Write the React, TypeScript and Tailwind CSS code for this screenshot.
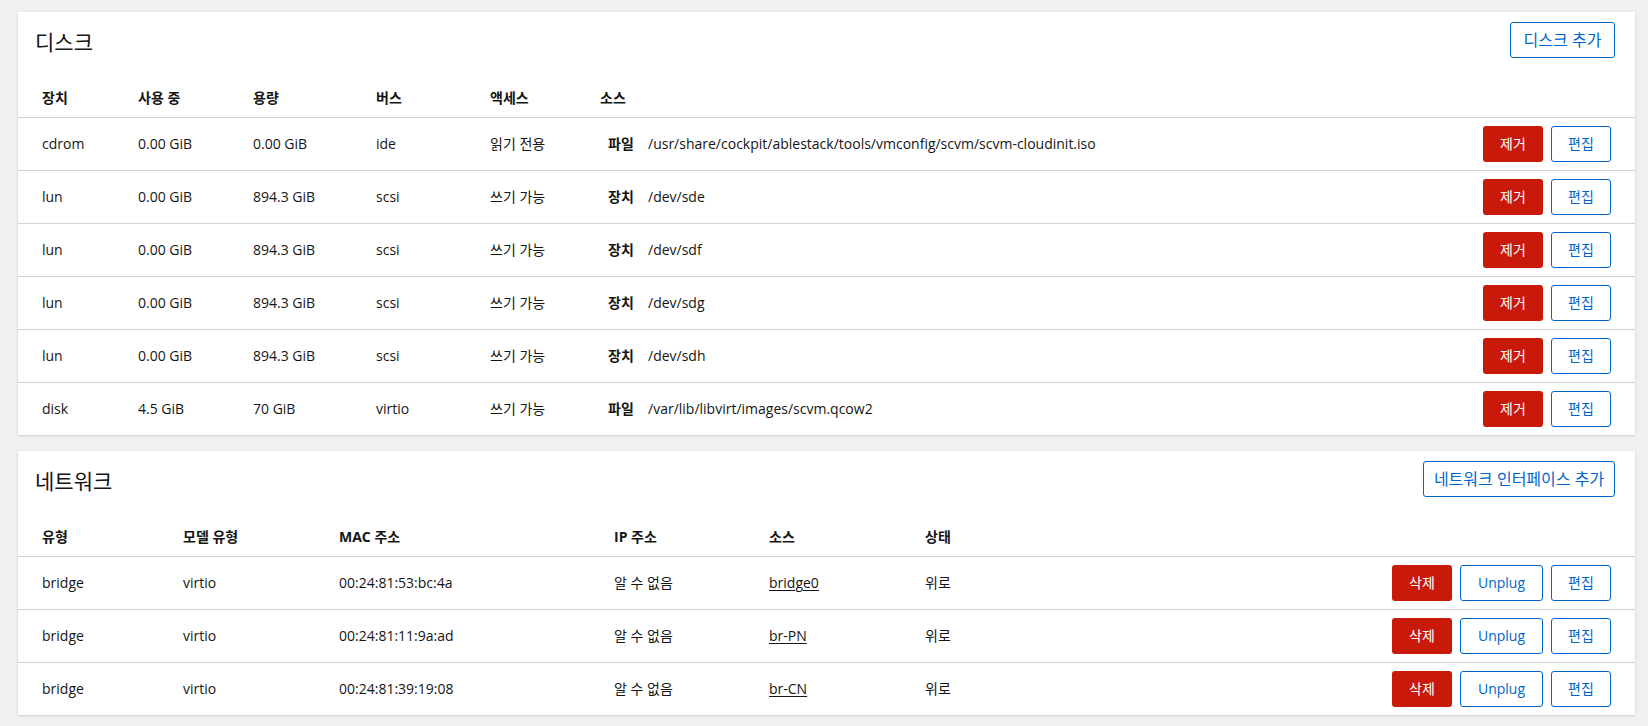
import React from "react";

type Disk = {
  dev: string;
  used: string;
  cap: string;
  bus: string;
  access: string;
  kind: string;
  src: string;
};

type Nic = {
  type: string;
  model: string;
  mac: string;
  ip: string;
  src: string;
  state: string;
};

const disks: Disk[] = [
  { dev: "cdrom", used: "0.00 GiB", cap: "0.00 GiB", bus: "ide", access: "읽기 전용", kind: "파일", src: "/usr/share/cockpit/ablestack/tools/vmconfig/scvm/scvm-cloudinit.iso" },
  { dev: "lun", used: "0.00 GiB", cap: "894.3 GiB", bus: "scsi", access: "쓰기 가능", kind: "장치", src: "/dev/sde" },
  { dev: "lun", used: "0.00 GiB", cap: "894.3 GiB", bus: "scsi", access: "쓰기 가능", kind: "장치", src: "/dev/sdf" },
  { dev: "lun", used: "0.00 GiB", cap: "894.3 GiB", bus: "scsi", access: "쓰기 가능", kind: "장치", src: "/dev/sdg" },
  { dev: "lun", used: "0.00 GiB", cap: "894.3 GiB", bus: "scsi", access: "쓰기 가능", kind: "장치", src: "/dev/sdh" },
  { dev: "disk", used: "4.5 GiB", cap: "70 GiB", bus: "virtio", access: "쓰기 가능", kind: "파일", src: "/var/lib/libvirt/images/scvm.qcow2" },
];

const nics: Nic[] = [
  { type: "bridge", model: "virtio", mac: "00:24:81:53:bc:4a", ip: "알 수 없음", src: "bridge0", state: "위로" },
  { type: "bridge", model: "virtio", mac: "00:24:81:11:9a:ad", ip: "알 수 없음", src: "br-PN", state: "위로" },
  { type: "bridge", model: "virtio", mac: "00:24:81:39:19:08", ip: "알 수 없음", src: "br-CN", state: "위로" },
];

function DangerButton({ label }: { label: string }) {
  return (
    <button className="h-9 w-[60px] rounded-[3px] bg-[#c9190b] text-sm text-white">
      {label}
    </button>
  );
}

function OutlineButton({ label, w }: { label: string; w: string }) {
  return (
    <button className={`h-9 rounded-[3px] border border-[#06c] bg-white text-sm text-[#06c] ${w}`}>
      {label}
    </button>
  );
}

function Card({ title, action, actionW, children }: { title: string; action: string; actionW: string; children: React.ReactNode }) {
  return (
    <section className="ml-[18px] mr-[13px] bg-white shadow-[0_1px_2px_0_rgba(3,3,3,0.12),0_0_2px_0_rgba(3,3,3,0.06)]">
      <div className="flex items-start justify-between pl-[17px] pr-5 pt-[10px] pb-[21px]">
        <h2 className="pt-[5px] text-[21px] leading-[31px] text-[#151515]">{title}</h2>
        <button className={`h-9 rounded-[3px] border border-[#06c] bg-white text-base text-[#06c] ${actionW}`}>
          {action}
        </button>
      </div>
      {children}
    </section>
  );
}

export default function App() {
  const diskCols = "grid grid-cols-[96px_115px_123px_114px_110px_1fr_auto] items-center px-6";
  const nicCols = "grid grid-cols-[141px_156px_275px_155px_156px_1fr_auto] items-center px-6";

  return (
    <div className="min-h-[726px] bg-[#f0f0f0] pt-3 pb-[10px] font-['Open_Sans','Noto_Sans_CJK_KR',sans-serif] text-sm text-[#151515]">
      {/* 디스크 */}
      <Card title="디스크" action="디스크 추가" actionW="w-[105px]">
        <div className={`${diskCols} h-[38px] font-bold`}>
          <span>장치</span>
          <span>사용 중</span>
          <span>용량</span>
          <span>버스</span>
          <span>액세스</span>
          <span>소스</span>
          <span />
        </div>
        {disks.map((d, i) => (
          <div key={i} className={`${diskCols} h-[53px] border-t border-[#d2d2d2]`}>
            <span>{d.dev}</span>
            <span>{d.used}</span>
            <span>{d.cap}</span>
            <span>{d.bus}</span>
            <span>{d.access}</span>
            <span className="flex items-center">
              <span className="ml-2 w-7 font-bold">{d.kind}</span>
              <span className="ml-3">{d.src}</span>
            </span>
            <span className="flex gap-2">
              <DangerButton label="제거" />
              <OutlineButton label="편집" w="w-[60px]" />
            </span>
          </div>
        ))}
      </Card>

      <div className="h-4" />

      {/* 네트워크 */}
      <Card title="네트워크" action="네트워크 인터페이스 추가" actionW="w-[192px]">
        <div className={`${nicCols} h-[38px] font-bold`}>
          <span>유형</span>
          <span>모델 유형</span>
          <span>MAC 주소</span>
          <span>IP 주소</span>
          <span>소스</span>
          <span>상태</span>
          <span />
        </div>
        {nics.map((n, i) => (
          <div key={i} className={`${nicCols} h-[53px] border-t border-[#d2d2d2]`}>
            <span>{n.type}</span>
            <span>{n.model}</span>
            <span>{n.mac}</span>
            <span>{n.ip}</span>
            <span>
              <a className="underline underline-offset-2">{n.src}</a>
            </span>
            <span>{n.state}</span>
            <span className="flex gap-2">
              <DangerButton label="삭제" />
              <OutlineButton label="Unplug" w="w-[83px]" />
              <OutlineButton label="편집" w="w-[60px]" />
            </span>
          </div>
        ))}
      </Card>
    </div>
  );
}
